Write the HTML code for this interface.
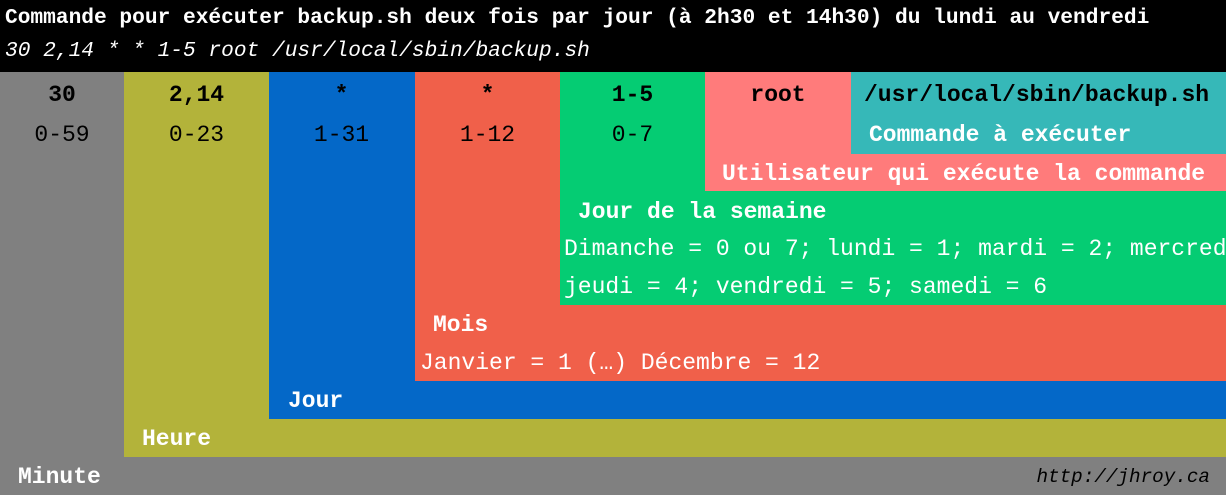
<!DOCTYPE html>
<html><head><meta charset="utf-8"><style>
body{margin:0;width:1226px;height:495px;overflow:hidden;position:relative;background:#808080;font-family:"Liberation Mono","DejaVu Sans Mono",monospace;font-size:23px}
div{position:absolute}
.b{right:0}
.t{line-height:24px;white-space:nowrap}
.w{color:#fff}
.bd{font-weight:bold}
.c{width:145px;text-align:center;color:#000}
.h{font-size:21.2px}
</style></head><body>
<div style="left:0;top:0;width:1226px;height:72px;background:#000"></div>
<div class="t w bd h" style="left:5px;top:6px">Commande pour exécuter backup.sh deux fois par jour (à 2h30 et 14h30) du lundi au vendredi</div>
<div class="t w h" style="left:5px;top:39px;font-style:italic">30 2,14 * * 1-5 root /usr/local/sbin/backup.sh</div>

<div class="b" style="left:124px;top:72px;bottom:38px;background:#b3b33a"></div>
<div class="b" style="left:269px;top:72px;bottom:76px;background:#0468c8"></div>
<div class="b" style="left:415px;top:72px;height:309px;background:#f0604a"></div>
<div class="b" style="left:560px;top:72px;height:233px;background:#05cc73"></div>
<div class="b" style="left:705px;top:72px;height:119px;background:#ff7b7b"></div>
<div class="b" style="left:851px;top:72px;height:82px;background:#36b8b8"></div>

<div class="t c bd" style="left:0;top:83px;width:124px">30</div>
<div class="t c" style="left:0;top:123px;width:124px">0-59</div>
<div class="t c bd" style="left:124px;top:83px">2,14</div>
<div class="t c" style="left:124px;top:123px">0-23</div>
<div class="t c bd" style="left:269px;top:83px">*</div>
<div class="t c" style="left:269px;top:123px">1-31</div>
<div class="t c bd" style="left:415px;top:83px">*</div>
<div class="t c" style="left:415px;top:123px">1-12</div>
<div class="t c bd" style="left:560px;top:83px">1-5</div>
<div class="t c" style="left:560px;top:123px">0-7</div>
<div class="t c bd" style="left:705px;top:83px;width:146px">root</div>
<div class="t bd" style="left:864px;top:83px;color:#000">/usr/local/sbin/backup.sh</div>
<div class="t w bd" style="left:869px;top:123px">Commande à exécuter</div>
<div class="t w bd" style="left:722px;top:162px">Utilisateur qui exécute la commande</div>
<div class="t w bd" style="left:578px;top:200px">Jour de la semaine</div>
<div class="t w" style="left:564px;top:237px;width:662px;overflow:hidden">Dimanche = 0 ou 7; lundi = 1; mardi = 2; mercredi</div>
<div class="t w" style="left:564px;top:275px">jeudi = 4; vendredi = 5; samedi = 6</div>
<div class="t w bd" style="left:433px;top:313px">Mois</div>
<div class="t w" style="left:420px;top:351px">Janvier = 1 (…) Décembre = 12</div>
<div class="t w bd" style="left:288px;top:389px">Jour</div>
<div class="t w bd" style="left:142px;top:427px">Heure</div>
<div class="t w bd" style="left:18px;top:465px">Minute</div>
<div class="t" style="right:16px;top:465px;font-style:italic;color:#000;font-size:19.3px">http://jhroy.ca</div>
</body></html>
